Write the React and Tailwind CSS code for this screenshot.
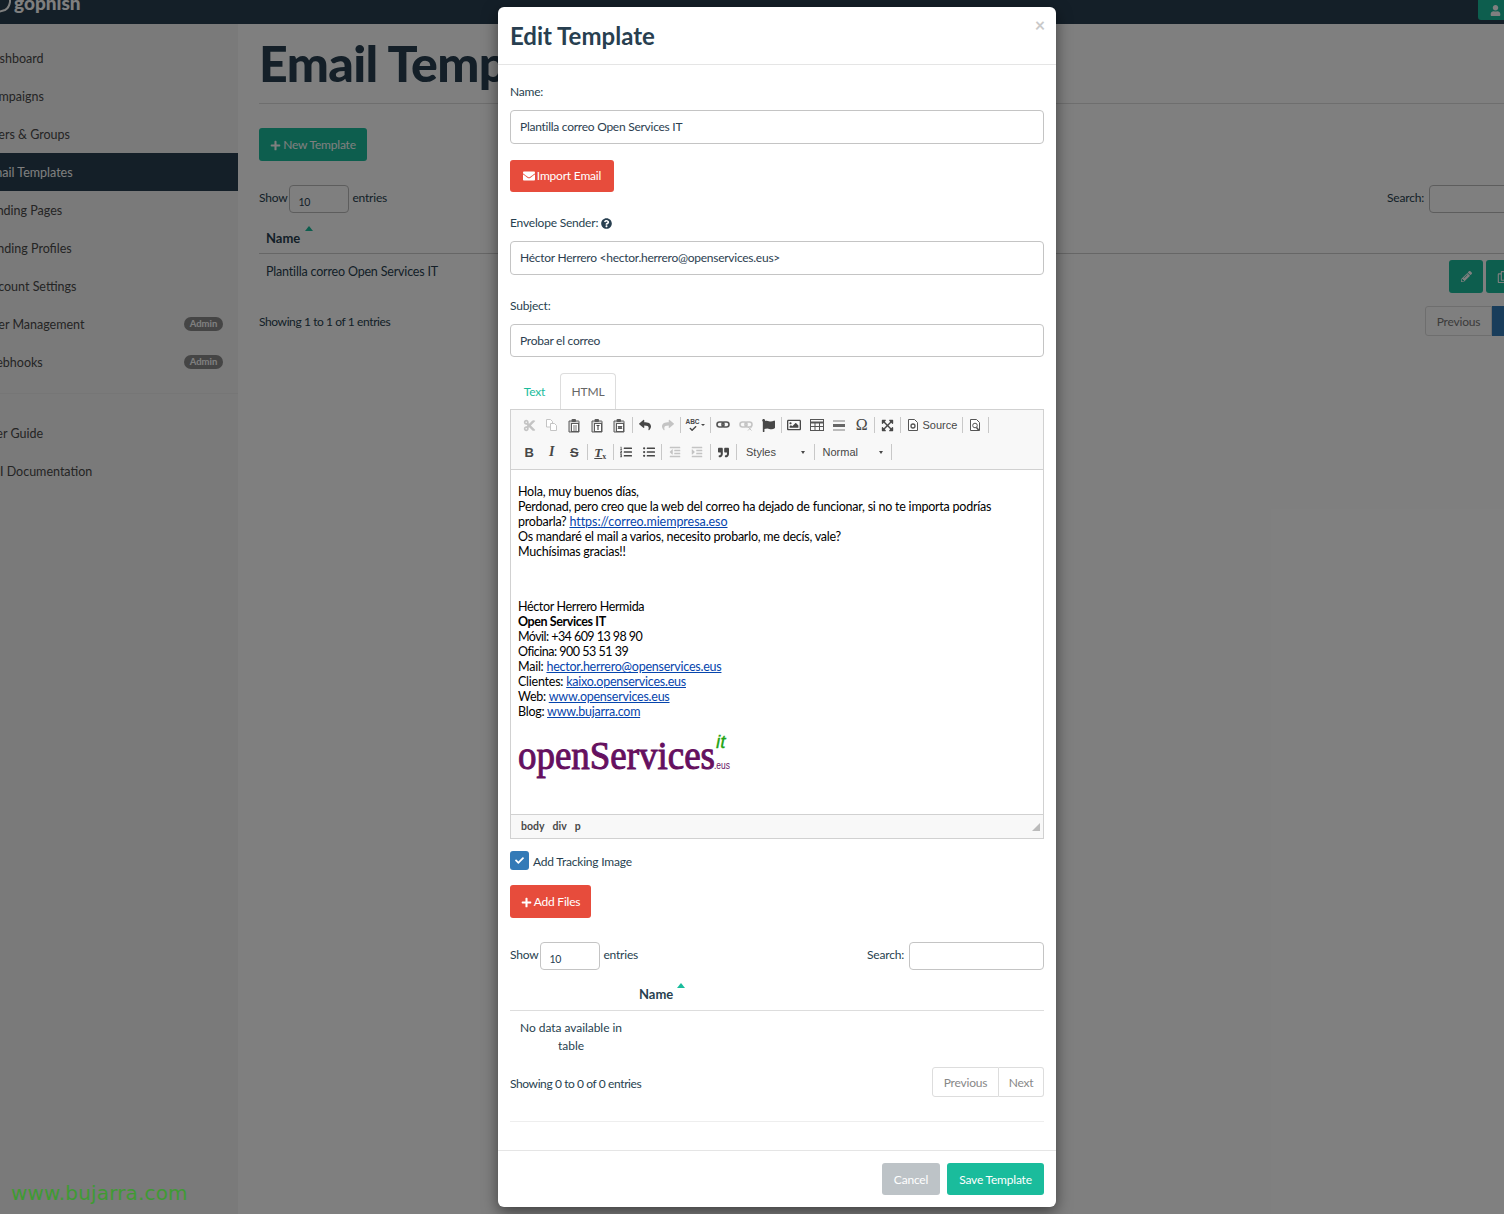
import React from "react";
import {
  FaCut, FaReply, FaShare, FaFlag, FaRegImage,
  FaExpandArrowsAlt, FaListOl, FaListUl, FaOutdent, FaIndent, FaQuoteRight,
  FaCheck, FaPlus, FaEnvelope, FaQuestionCircle, FaPencilAlt, FaUser, FaRegCopy,
} from "react-icons/fa";

const side1 = [
  ["Dashboard", "-ml-[16px]"], ["Campaigns", "-ml-[16px]"], ["Users & Groups", "-ml-[16px]"], ["Email Templates", "-ml-[15px]", true], ["Landing Pages", "-ml-[16px]"],
  ["Sending Profiles", "-ml-[16px]"], ["Account Settings", "-ml-[16px]"], ["User Management", "-ml-[16px]", false, true], ["Webhooks", "-ml-[16px]", false, true],
];

function Sidebar() {
  return (
    <aside className="w-[238px] shrink-0 bg-[#f4f4f4] overflow-hidden pt-[15px] text-[12.5px] tracking-normal">
      {side1.map(([t, ml, active, admin]) => (
        <div key={t} className={`h-[38px] flex items-center justify-between pr-[15px] ${active ? "bg-[#283f50] text-white" : "text-[#4a4a4a]"}`}>
          <span className={`whitespace-nowrap pt-[3px] ${ml}`}>{t}</span>
          {admin && <span className="h-[14px] w-[39px] rounded-full bg-[#8a8a8a] text-white text-[9.5px] font-bold flex items-center justify-center">Admin</span>}
        </div>
      ))}
      <div className="border-t border-[#ececec] mt-[12px] pt-[21px]">
        <div className="h-[38px] flex items-center text-[#4a4a4a] whitespace-nowrap -ml-[18px] pt-[1px]">User Guide</div>
        <div className="h-[38px] flex items-center text-[#4a4a4a] whitespace-nowrap -ml-[16px] pt-[1px]">API Documentation</div>
      </div>
    </aside>
  );
}

function SortArrow({ cls }) {
  return <span className={`w-0 h-0 border-x-[4.5px] border-x-transparent border-b-[5px] border-b-[#1abc9c] ${cls}`} />;
}

function Main() {
  return (
    <main className="flex-1 min-w-0 overflow-hidden pl-[21px] bg-white text-[#283f50]">
      <div className="w-[1300px]">
        <h1 className="h-[80px] border-b border-[#dcdcdc] text-[50px] font-black tracking-[-0.6px] leading-[79px] whitespace-nowrap">Email Templates</h1>
        <button className="mt-[24px] h-[33px] w-[108px] rounded-[3px] bg-[#1abc9c] text-white flex items-center justify-center gap-[2px] pt-[1px]"><FaPlus size={11} />New Template</button>
        <div className="mt-[24px] h-[28px] flex items-start justify-between">
          <div className="flex items-start">
            <span className="mr-[2px] leading-[26px]">Show</span>
            <div className="w-[60px] h-[28px] rounded-[4px] border border-[#bbb] pl-[8px] pt-[9px] text-[10.5px]">10</div>
            <span className="ml-[3px] leading-[26px]">entries</span>
          </div>
          <div className="flex items-start">
            <span className="mr-[5px] leading-[26px]">Search:</span>
            <div className="w-[130px] h-[28px] rounded-[4px] border border-[#bbb]" />
          </div>
        </div>
        <div className="h-[41px] border-b border-[#ccc] pl-[7px] flex font-bold text-[13px] tracking-normal">
          <span className="mt-[16px]">Name</span>
          <SortArrow cls="ml-[5px] mt-[13px]" />
        </div>
        <div className="h-[52px] flex justify-between pl-[7px] pt-[6px]">
          <span className="pt-[2px] leading-[20px] text-[12.5px] tracking-[-0.18px]">Plantilla correo Open Services IT</span>
          <div className="flex gap-[3px] mr-[39px]">
            <div className="w-[34px] h-[33px] rounded-[3px] bg-[#1abc9c] flex items-center justify-center text-white"><FaPencilAlt size={11} /></div>
            <div className="w-[34px] h-[33px] rounded-[3px] bg-[#1abc9c] flex items-center justify-center text-white"><FaRegCopy size={12} /></div>
          </div>
        </div>
        <div className="flex justify-between">
          <span className="leading-[32px] tracking-[-0.4px]">Showing 1 to 1 of 1 entries</span>
          <div className="flex h-[30px]">
            <div className="w-[67px] border border-[#ddd] rounded-l-[3px] flex items-center justify-center text-[#777] pt-[1px]">Previous</div>
            <div className="w-[67px] bg-[#337ab7] text-white flex items-center justify-center">1</div>
          </div>
        </div>
      </div>
    </main>
  );
}

const Sep = () => <span className="w-[1px] h-[16px] bg-[#c8c8c8] mx-[1.25px] shrink-0" />;
const Btn = ({ children, off, w = "w-[22.5px]" }) => (
  <span className={`${w} h-[20px] shrink-0 flex items-center justify-center ${off ? "text-[#c4c4c4]" : "text-[#474747]"}`}>{children}</span>
);

function PasteIcon({ mark }) {
  return (
    <svg width="14" height="15" viewBox="0 0 14 15" fill="none">
      <path d="M2 3h9.5a.5.5 0 0 1 .5.5V14H2z" fill="#d9d9d9" stroke="#5a5a5a" />
      <rect x="4.5" y="1" width="4.5" height="3" rx="1" fill="#5a5a5a" />
      <rect x="4.5" y="5.5" width="7" height="8" fill="#fff" stroke="#5a5a5a" />
      {mark === "T" && <path d="M6.5 7.5h3M8 7.5v4.5" stroke="#444" strokeWidth="1.1" />}
      {mark === "W" && <path d="M6 8l2 3 2-3M6 11l2-3 2 3" stroke="#444" />}
      {!mark && <path d="M6 8h4M6 10h4M6 12h4" stroke="#777" />}
    </svg>
  );
}
function CopyIcon() {
  return (
    <svg width="13" height="14" viewBox="0 0 13 14" fill="none" stroke="#c4c4c4">
      <path d="M1.5 1.5h4l2 2V9h-6z" fill="#fff" />
      <path d="M5.5 5.5h4l2 2v5h-6z" fill="#fff" />
    </svg>
  );
}
function Chain({ off }) {
  const c = off ? "#c4c4c4" : "#555";
  return (
    <svg width="14" height="12" viewBox="0 0 14 12" fill="none" stroke={c} strokeWidth="1.6">
      <rect x="1" y="3" width="7" height="5" rx="2.5" />
      <rect x="6" y="3" width="7" height="5" rx="2.5" />
      {off && <path d="M9 8l3.5 3.5M12.5 8L9 11.5" strokeWidth="1" />}
    </svg>
  );
}
function TableIcon() {
  return (
    <svg width="14" height="12" viewBox="0 0 14 12" fill="none" stroke="#555">
      <rect x="0.5" y="0.5" width="13" height="11" />
      <path d="M0.5 3.5h13" strokeWidth="2" />
      <path d="M0.5 7.5h13M5 3v8.5M9.5 3v8.5" />
    </svg>
  );
}
function DocIcon({ search }) {
  return (
    <svg width="12" height="14" viewBox="0 0 12 14" fill="none" stroke="#555">
      <path d="M1.5 1.5h6l3 3v8h-9z" fill="#fff" />
      {search ? <><circle cx="6" cy="7.5" r="2.3" /><path d="M7.5 9.5l2.5 3" strokeWidth="1.5" /></> : <circle cx="6" cy="8" r="2" strokeWidth="1.3" />}
    </svg>
  );
}

function Toolbar() {
  const sm = "font-['Liberation_Sans',sans-serif] text-[11px] text-[#474747] tracking-normal";
  const gly = "font-['Liberation_Serif',serif] tracking-normal leading-none";
  return (
    <div className="h-[60px] bg-[#f8f8f8] border-b border-[#d1d1d1] pl-[7px] pt-[5px]">
      <div className="h-[20px] flex items-center">
        <Btn off><FaCut size={13} /></Btn><Btn off><CopyIcon /></Btn>
        <Btn><PasteIcon /></Btn><Btn><PasteIcon mark="T" /></Btn><Btn><PasteIcon mark="W" /></Btn><Sep />
        <Btn><FaReply size={12} /></Btn><Btn off><FaShare size={12} /></Btn><Sep />
        <Btn w="w-[26px]">
          <span className="relative w-[13px] h-[14px] flex flex-col items-center">
            <span className="text-[6.5px] leading-[7px] font-bold text-[#474747] font-['Liberation_Sans',sans-serif] tracking-normal">ABC</span>
            <FaCheck size={8} />
          </span>
          <span className="ml-[2px] w-0 h-0 border-x-[2px] border-x-transparent border-t-[2px] border-t-[#474747]" />
        </Btn><Sep />
        <Btn><Chain /></Btn><Btn><Chain off /></Btn><Btn><FaFlag size={13} /></Btn><Sep />
        <Btn><FaRegImage size={14} /></Btn><Btn><TableIcon /></Btn>
        <Btn><span className="flex flex-col gap-[2px] w-[12px]"><span className="h-[2px] bg-[#bbb]" /><span className="h-[3px] bg-[#666]" /><span className="h-[2px] bg-[#bbb]" /></span></Btn>
        <Btn><span className={`${gly} text-[16px]`}>Ω</span></Btn><Sep />
        <Btn><FaExpandArrowsAlt size={13} /></Btn><Sep />
        <span className={`w-[58px] flex items-center pl-[4px] gap-[4px] shrink-0 ${sm}`}><DocIcon />Source</span><Sep />
        <Btn><DocIcon search /></Btn><Sep />
      </div>
      <div className="h-[20px] mt-[7px] flex items-center">
        <Btn><span className="font-['Liberation_Sans',sans-serif] font-bold text-[13px] leading-none tracking-normal">B</span></Btn>
        <Btn><span className={`${gly} italic font-bold text-[14px]`}>I</span></Btn>
        <Btn><span className="font-['Liberation_Sans',sans-serif] font-bold text-[13px] leading-none line-through tracking-normal">S</span></Btn><Sep />
        <Btn><span className={`${gly} italic font-bold text-[13px] underline`}>T<sub className="text-[8px] not-italic">x</sub></span></Btn><Sep />
        <Btn><FaListOl size={12} /></Btn><Btn><FaListUl size={12} /></Btn><Sep />
        <Btn off><FaOutdent size={12} /></Btn><Btn off><FaIndent size={12} /></Btn><Sep />
        <Btn><FaQuoteRight size={11} /></Btn><Sep />
        <span className={`w-[75px] shrink-0 flex items-center justify-between pl-[8px] pr-[8px] ${sm}`}>Styles<span className="w-0 h-0 border-x-[2px] border-x-transparent border-t-[3px] border-t-[#474747]" /></span><Sep />
        <span className={`w-[73px] shrink-0 flex items-center justify-between pl-[6px] pr-[7px] ${sm}`}>Normal<span className="w-0 h-0 border-x-[2px] border-x-transparent border-t-[3px] border-t-[#474747]" /></span><Sep />
      </div>
    </div>
  );
}

const A = ({ children }) => <span className="text-[#0645ad] underline">{children}</span>;

function OpenLogo() {
  return (
    <svg width="216" height="52" viewBox="0 0 216 52" className="mt-[8px]" role="img" letterSpacing="0">
      <text x="0" y="42" textLength="197" lengthAdjust="spacingAndGlyphs" fontFamily="'Liberation Serif',serif" fontSize="40" fontWeight="400" fill="#65105f" stroke="#65105f" strokeWidth="1">openServices</text>
      <text x="196" y="42" textLength="16" lengthAdjust="spacingAndGlyphs" fontFamily="'Liberation Sans',sans-serif" fontSize="10" fill="#65105f">.eus</text>
      <text x="198" y="21" fontFamily="'Liberation Sans',sans-serif" fontSize="19" fontStyle="italic" fontWeight="400" fill="#1fa514" stroke="#1fa514" strokeWidth="0.3">it</text>
    </svg>
  );
}

function Editor() {
  return (
    <div className="h-[430px] border border-[#d1d1d1] flex flex-col">
      <Toolbar />
      <div className="flex-1 px-[7px] pt-[14px] text-[12.5px] tracking-[-0.24px] leading-[15px] text-black">
        <p>Hola, muy buenos días,</p>
        <p>Perdonad, pero creo que la web del correo ha dejado de funcionar, si no te importa podrías</p>
        <p>probarla? <span className="tracking-[-0.05px]"><A>https://correo.miempresa.eso</A></span></p>
        <p>Os mandaré el mail a varios, necesito probarlo, me decís, vale?</p>
        <p>Muchísimas gracias!!</p>
        <p className="mt-[40px] tracking-[-0.35px]">Héctor Herrero Hermida</p>
        <p className="font-bold tracking-[-0.4px]">Open Services IT</p>
        <p className="tracking-[-0.55px]">Móvil: +34 609 13 98 90</p>
        <p className="tracking-[-0.5px]">Oficina: 900 53 51 39</p>
        <p>Mail: <A>hector.herrero@openservices.eus</A></p>
        <p>Clientes: <A>kaixo.openservices.eus</A></p>
        <p>Web: <A>www.openservices.eus</A></p>
        <p>Blog: <A>www.bujarra.com</A></p>
        <OpenLogo />
      </div>
      <div className="h-[24px] bg-[#f8f8f8] border-t border-[#d1d1d1] flex items-center justify-between pl-[10px] pr-[3px] text-[10.5px] font-bold text-[#484848] tracking-normal">
        <span className="flex gap-[8px]"><span>body</span><span>div</span><span>p</span></span>
        <span className="w-0 h-0 border-l-[8px] border-l-transparent border-b-[8px] border-b-[#bbb]" />
      </div>
    </div>
  );
}

const Field = ({ value, h = "h-[34px]" }) => (
  <div className={`${h} mt-[8px] rounded-[4px] border border-[#c4c4c4] pl-[9px] flex items-center text-[#2c3e50] tracking-[-0.26px]`}>{value}</div>
);

function Modal() {
  return (
    <div className="absolute left-[498px] top-[7px] w-[558px] h-[1200px] bg-white rounded-[6px] shadow-[0_5px_15px_rgba(0,0,0,0.5)] flex flex-col text-[#283f50]">
      <div className="h-[58px] shrink-0 border-b border-[#e5e5e5] px-[12px] flex items-center justify-between">
        <h2 className="text-[24px] font-bold tracking-normal">Edit Template</h2>
        <span className="text-[#c9c9c9] text-[18px] font-bold -mt-[20px] mr-[-1px]">×</span>
      </div>
      <div className="flex-1 px-[12px]">
        <div className="mt-[17px] h-[20px] leading-[20px]">Name:</div>
        <Field value="Plantilla correo Open Services IT" />
        <button className="mt-[16px] h-[32px] w-[104px] rounded-[3px] bg-[#e74c3c] text-white flex items-center justify-center gap-[2px]"><FaEnvelope size={12} />Import Email</button>
        <div className="mt-[21px] h-[20px] flex items-center gap-[3px]">Envelope Sender: <FaQuestionCircle size={11} /></div>
        <Field value="Héctor Herrero <hector.herrero@openservices.eus>" />
        <div className="mt-[21px] h-[20px] leading-[20px]">Subject:</div>
        <Field value="Probar el correo" h="h-[33px]" />
        <div className="mt-[16px] h-[36px] flex pl-[1px]">
          <span className="w-[49px] flex items-center justify-center text-[#1abc9c] pt-[1px] -ml-[1px]">Text</span>
          <span className="w-[56px] ml-[1px] border border-b-0 border-[#ddd] rounded-t-[4px] flex items-center justify-center text-[#666]">HTML</span>
        </div>
        <Editor />
        <div className="mt-[12px] h-[19px] flex items-center gap-[4px]">
          <span className="w-[19px] h-[19px] rounded-[3px] bg-[#337ab7] text-white flex items-center justify-center"><FaCheck size={9} /></span>
          <span className="pt-[3px]">Add Tracking Image</span>
        </div>
        <button className="mt-[15px] h-[33px] w-[81px] rounded-[3px] bg-[#e74c3c] text-white flex items-center justify-center gap-[2px] pt-[1px]"><FaPlus size={11} />Add Files</button>
        <div className="mt-[24px] h-[28px] flex items-start justify-between">
          <div className="flex items-start">
            <span className="mr-[2px] leading-[26px]">Show</span>
            <div className="w-[60px] h-[28px] rounded-[4px] border border-[#c4c4c4] pl-[8px] pt-[9px] text-[10.5px]">10</div>
            <span className="ml-[3px] leading-[26px]">entries</span>
          </div>
          <div className="flex items-start">
            <span className="mr-[5px] leading-[26px]">Search:</span>
            <div className="w-[135px] h-[28px] rounded-[4px] border border-[#c4c4c4]" />
          </div>
        </div>
        <div className="h-[41px] border-b border-[#ddd] pl-[129px] flex font-bold text-[13px] tracking-normal">
          <span className="mt-[15px]">Name</span>
          <SortArrow cls="ml-[4px] mt-[13px]" />
        </div>
        <div className="h-[56px] w-[122px] pt-[8px] text-center leading-[18px] tracking-[-0.05px]">No data available in table</div>
        <div className="h-[30px] flex justify-between items-center">
          <span className="pt-[3px] tracking-[-0.4px]">Showing 0 to 0 of 0 entries</span>
          <div className="flex h-[30px] text-[#888]">
            <div className="w-[67px] border border-[#ddd] rounded-l-[3px] flex items-center justify-center pt-[2px]">Previous</div>
            <div className="w-[45px] border border-l-0 border-[#ddd] rounded-r-[3px] flex items-center justify-center pt-[2px]">Next</div>
          </div>
        </div>
        <div className="mt-[24px] border-t border-[#eee]" />
      </div>
      <div className="h-[57px] shrink-0 border-t border-[#e5e5e5] px-[12px] pt-[12px] flex justify-end gap-[7px]">
        <button className="h-[32px] w-[58px] rounded-[3px] bg-[#bdc3c7] text-white pt-[2px]">Cancel</button>
        <button className="h-[32px] w-[97px] rounded-[3px] bg-[#1abc9c] text-white pt-[2px]">Save Template</button>
      </div>
    </div>
  );
}

export default function App() {
  return (
    <div className="relative w-[1504px] h-[1214px] overflow-hidden font-['Lato',sans-serif] text-[12px] tracking-[-0.2px]">
      <header className="h-[24px] bg-[#283f50] overflow-hidden flex justify-between items-start">
        <div className="flex items-start text-white">
          <svg width="12" height="14" viewBox="0 0 12 14" className="-mt-[1px]" fill="none" stroke="currentColor" strokeWidth="2"><path d="M-2 13 L5 11 Q9 9 10 3 V-3" /></svg>
          <span className="text-[19px] font-black leading-none -mt-[7px] ml-[2px] tracking-normal">gophish</span>
        </div>
        <div className="w-[26px] h-[20px] bg-[#1abc9c] rounded-bl-[3px] text-white flex items-center pl-[12px]"><FaUser size={11} /></div>
      </header>
      <div className="flex h-[1190px]">
        <Sidebar />
        <Main />
      </div>
      <div className="absolute inset-0 bg-black/50" />
      <Modal />
      <div className="absolute left-[11px] top-[1178px] text-[20px] text-[#3f9a33] tracking-[0.17px] font-['DejaVu_Sans',sans-serif]">www.bujarra.com</div>
    </div>
  );
}
